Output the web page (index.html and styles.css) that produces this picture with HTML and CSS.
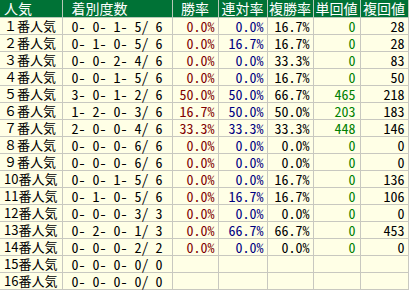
FILE: index.html
```html
<!DOCTYPE html>
<html lang="ja">
<head>
<meta charset="utf-8">
<link rel="stylesheet" href="styles.css">
</head>
<body>
<table class="stats">
  <colgroup>
    <col class="c-name"><col class="c-rec"><col class="c-win"><col class="c-ren"><col class="c-fuku"><col class="c-tan"><col class="c-fkv">
  </colgroup>
  <thead>
    <tr>
      <th class="h-name">人気</th>
      <th class="h-rec">着別度数</th>
      <th>勝率</th>
      <th>連対率</th>
      <th>複勝率</th>
      <th>単回値</th>
      <th>複回値</th>
    </tr>
  </thead>
  <tbody>
    <tr><td class="name">１番人気</td><td class="rec">0- 0- 1- 5/ 6</td><td class="win">0.0%</td><td class="ren">0.0%</td><td class="num">16.7%</td><td class="tan">0</td><td class="num">28</td></tr>
    <tr><td class="name">２番人気</td><td class="rec">0- 1- 0- 5/ 6</td><td class="win">0.0%</td><td class="ren">16.7%</td><td class="num">16.7%</td><td class="tan">0</td><td class="num">28</td></tr>
    <tr><td class="name">３番人気</td><td class="rec">0- 0- 2- 4/ 6</td><td class="win">0.0%</td><td class="ren">0.0%</td><td class="num">33.3%</td><td class="tan">0</td><td class="num">83</td></tr>
    <tr><td class="name">４番人気</td><td class="rec">0- 0- 1- 5/ 6</td><td class="win">0.0%</td><td class="ren">0.0%</td><td class="num">16.7%</td><td class="tan">0</td><td class="num">50</td></tr>
    <tr><td class="name">５番人気</td><td class="rec">3- 0- 1- 2/ 6</td><td class="win">50.0%</td><td class="ren">50.0%</td><td class="num">66.7%</td><td class="tan">465</td><td class="num">218</td></tr>
    <tr><td class="name">６番人気</td><td class="rec">1- 2- 0- 3/ 6</td><td class="win">16.7%</td><td class="ren">50.0%</td><td class="num">50.0%</td><td class="tan">203</td><td class="num">183</td></tr>
    <tr><td class="name">７番人気</td><td class="rec">2- 0- 0- 4/ 6</td><td class="win">33.3%</td><td class="ren">33.3%</td><td class="num">33.3%</td><td class="tan">448</td><td class="num">146</td></tr>
    <tr><td class="name">８番人気</td><td class="rec">0- 0- 0- 6/ 6</td><td class="win">0.0%</td><td class="ren">0.0%</td><td class="num">0.0%</td><td class="tan">0</td><td class="num">0</td></tr>
    <tr><td class="name">９番人気</td><td class="rec">0- 0- 0- 6/ 6</td><td class="win">0.0%</td><td class="ren">0.0%</td><td class="num">0.0%</td><td class="tan">0</td><td class="num">0</td></tr>
    <tr><td class="name">10番人気</td><td class="rec">0- 0- 1- 5/ 6</td><td class="win">0.0%</td><td class="ren">0.0%</td><td class="num">16.7%</td><td class="tan">0</td><td class="num">136</td></tr>
    <tr><td class="name">11番人気</td><td class="rec">0- 1- 0- 5/ 6</td><td class="win">0.0%</td><td class="ren">16.7%</td><td class="num">16.7%</td><td class="tan">0</td><td class="num">106</td></tr>
    <tr><td class="name">12番人気</td><td class="rec">0- 0- 0- 3/ 3</td><td class="win">0.0%</td><td class="ren">0.0%</td><td class="num">0.0%</td><td class="tan">0</td><td class="num">0</td></tr>
    <tr><td class="name">13番人気</td><td class="rec">0- 2- 0- 1/ 3</td><td class="win">0.0%</td><td class="ren">66.7%</td><td class="num">66.7%</td><td class="tan">0</td><td class="num">453</td></tr>
    <tr><td class="name">14番人気</td><td class="rec">0- 0- 0- 2/ 2</td><td class="win">0.0%</td><td class="ren">0.0%</td><td class="num">0.0%</td><td class="tan">0</td><td class="num">0</td></tr>
    <tr><td class="name">15番人気</td><td class="rec">0- 0- 0- 0/ 0</td><td class="win"></td><td class="ren"></td><td class="num"></td><td class="tan"></td><td class="num"></td></tr>
    <tr><td class="name">16番人気</td><td class="rec">0- 0- 0- 0/ 0</td><td class="win"></td><td class="ren"></td><td class="num"></td><td class="tan"></td><td class="num"></td></tr>
  </tbody>
</table>
</body>
</html>
```

FILE: styles.css
```css
html, body {
  margin: 0;
  padding: 0;
  background: #ffffff;
}

.stats {
  border-collapse: collapse;
  table-layout: fixed;
  width: 408px;
  font-family: "Noto Sans Mono CJK JP", "Liberation Mono", "Noto Sans CJK JP", monospace;
  font-size: 14px;
  background: #ffffe6;
}

.c-name { width: 62px; }
.c-rec { width: 110px; }
.c-win { width: 46px; }
.c-ren { width: 49px; }
.c-fuku { width: 46px; }
.c-tan { width: 47px; }
.c-fkv { width: 48px; }

.stats th {
  background: #007236;
  color: #ffffff;
  font-family: "Noto Sans CJK JP", sans-serif;
  font-weight: normal;
  font-size: 14px;
  height: 17px;
  line-height: 17px;
  padding: 0;
  border: 1px solid #b8c8b8;
  border-top: none;
  text-align: center;
  white-space: nowrap;
  overflow: visible;
}

.stats th.h-name {
  text-align: left;
  padding-left: 4px;
  border-left: none;
}

.stats th.h-rec {
  text-align: left;
  padding-left: 9px;
}

.stats td {
  height: 16px;
  line-height: 16px;
  padding: 0 3px 0 3px;
  border: 1px solid #c8c8c0;
  text-align: right;
  white-space: pre;
  color: #000000;
}

.stats td.name {
  text-align: left;
  font-family: "Noto Sans CJK JP", sans-serif;
  font-size: 13px;
  padding-left: 4px;
  border-left: none;
}

.stats td.rec {
  text-align: center;
}

.stats td.tan {
  padding-right: 4px;
}

.stats td.win { color: #800000; }
.stats td.ren { color: #000080; }
.stats td.tan { color: #008000; }
```
